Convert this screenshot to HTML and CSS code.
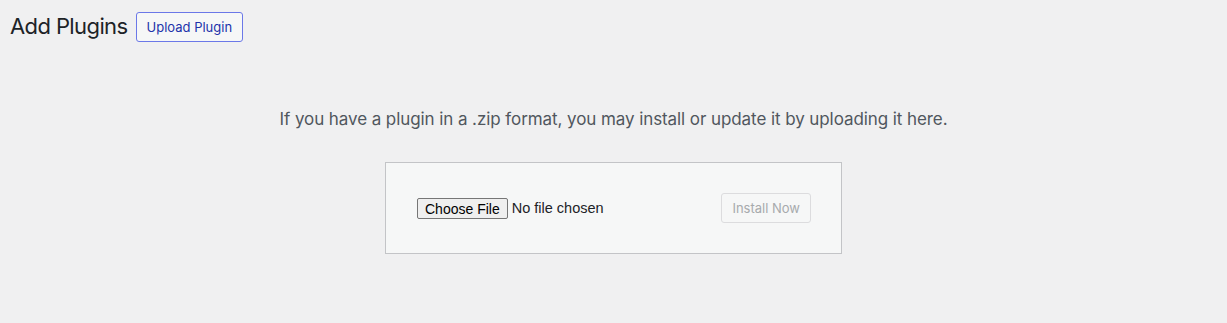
FILE: index.html
```html
<!DOCTYPE html>
<html lang="en">
<head>
  <meta charset="UTF-8">
  <title>Add Plugins</title>
  <link rel="stylesheet" href="styles.css">
</head>
<body>
  <div class="wrap">
    <div class="page-header">
      <h1>Add Plugins</h1>
      <a class="page-title-action" href="#">Upload Plugin</a>
    </div>
    <div class="upload-plugin">
      <p class="install-help">If you have a plugin in a .zip format, you may install or update it by uploading it here.</p>
      <form class="wp-upload-form">
        <div class="file-field">
          <span class="file-button">Choose File</span>
          <span class="file-name">No file chosen</span>
        </div>
        <button type="button" class="button" disabled>Install Now</button>
      </form>
    </div>
  </div>
</body>
</html>
```

FILE: styles.css
```css
/* Reset */
body, h1, p {
  margin: 0;
  padding: 0;
}

body {
  background-color: #f0f0f1;
  color: #1d2327;
  font-family: Inter, "Noto Sans", sans-serif;
  font-size: 13px;
}

.wrap {
  padding: 0 10px;
}

.page-header {
  display: flex;
  align-items: center;
  gap: 8px;
  height: 53px;
}

.page-header h1 {
  font-size: 22px;
  font-weight: 400;
  line-height: 1.3;
  letter-spacing: -0.6px;
  color: #1d2327;
}

.page-title-action {
  display: inline-flex;
  align-items: center;
  height: 30px;
  box-sizing: border-box;
  padding: 0 10px;
  border: 1px solid #6b78e8;
  border-radius: 3px;
  background-color: #f6f7f7;
  color: #2233aa;
  font-size: 13px;
  text-decoration: none;
}

.upload-plugin {
  display: flex;
  flex-direction: column;
  align-items: center;
}

.install-help {
  color: #50575e;
  font-size: 17px;
  letter-spacing: -0.08px;
  padding-top: 56px;
  margin-bottom: 33px;
}

.wp-upload-form {
  display: flex;
  align-items: center;
  justify-content: space-between;
  box-sizing: border-box;
  width: 457px;
  padding: 30px 30px 30px 31px;
  border: 1px solid #c3c4c7;
  background-color: #f6f7f7;
  margin-bottom: 70px;
}

.file-field {
  display: flex;
  align-items: center;
  gap: 4px;
}

.file-button {
  font-family: "Liberation Sans", Arial, sans-serif;
  font-size: 14px;
  color: #000;
  background-color: #efefef;
  border: 1px solid #767676;
  border-radius: 2px;
  padding: 2px 7px 1px;
}

.file-name {
  font-family: "Liberation Sans", Arial, sans-serif;
  font-size: 14.5px;
  color: #1d2327;
}

.button {
  height: 30px;
  padding: 0 10px;
  border: 1px solid #dcdcde;
  border-radius: 3px;
  background-color: #f6f7f7;
  color: #a7aaad;
  font-family: Inter, "Noto Sans", sans-serif;
  font-size: 13px;
}
```
